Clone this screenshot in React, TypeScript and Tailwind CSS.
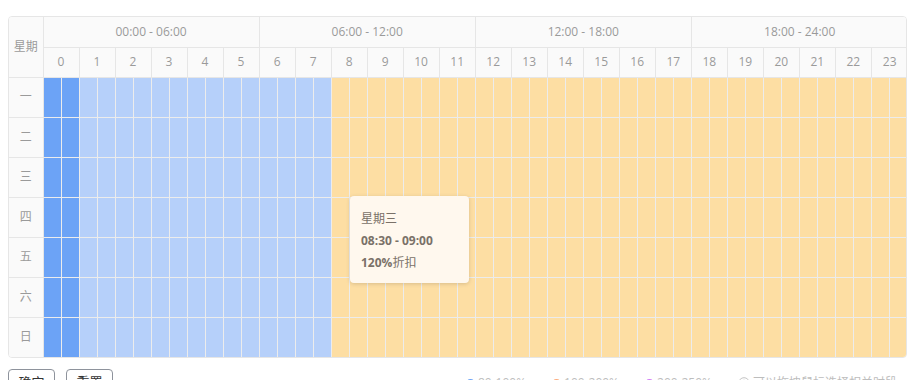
import React from 'react';

const days: string[] = ["一", "二", "三", "四", "五", "六", "日"];
const ranges: string[] = ["00:00 - 06:00", "06:00 - 12:00", "12:00 - 18:00", "18:00 - 24:00"];
const hours: number[] = Array.from({ length: 24 }, (_, i) => i);
const halves: number[] = Array.from({ length: 48 }, (_, i) => i);

// half-hour index -> colour class
function cellColor(i: number): string {
  if (i < 2) return "bg-[#6ca3f6]";
  if (i < 16) return "bg-[#b6d0fa]";
  return "bg-[#fddea3]";
}

const Legend = ({ color, text }: { color: string; text: string }) => (
  <div className="flex items-center gap-[3px]">
    <span className={`inline-block w-[9px] h-[9px] rounded-full ${color}`}></span>
    <span>{text}</span>
  </div>
);

const App = () => {
  return (
    <div className="pt-4 px-2 text-[12px] font-['Open_Sans','Noto_Sans_CJK_SC',sans-serif] bg-white min-h-screen">
      <div className="relative w-[899px]">
        <div className="border border-[#e6e6e6] rounded-[4px] overflow-hidden">
          <table className="table-fixed border-collapse w-[897px] text-[#9a9a9a]">
            <colgroup>
              <col className="w-[34px]" />
              {halves.map((h) => (
                <col key={h} className="w-[18px]" />
              ))}
            </colgroup>
            <thead className="bg-[#fafafa]">
              <tr className="h-[30px]">
                <th rowSpan={2} className="font-normal border-r border-b border-[#e6e6e6]">星期</th>
                {ranges.map((r, i) => (
                  <th key={r} colSpan={12} className={`font-normal border-b border-[#e6e6e6] ${i < 3 ? "border-r" : ""}`}>{r}</th>
                ))}
              </tr>
              <tr className="h-[30px]">
                {hours.map((h) => (
                  <th key={h} colSpan={2} className={`font-normal border-b border-[#e6e6e6] ${h < 23 ? "border-r" : ""}`}>{h}</th>
                ))}
              </tr>
            </thead>
            <tbody>
              {days.map((d, r) => (
                <tr key={d} className="h-[40px]">
                  <td className={`bg-[#fafafa] text-center border-r border-[#e6e6e6] ${r < 6 ? "border-b" : ""}`}>{d}</td>
                  {halves.map((h) => (
                    <td key={h} className={`${cellColor(h)} border-[#ececec] ${h < 47 ? "border-r" : ""} ${r < 6 ? "border-b" : ""}`}></td>
                  ))}
                </tr>
              ))}
            </tbody>
          </table>
        </div>

        {/* hover tooltip */}
        <div className="absolute left-[342px] top-[180px] w-[119px] h-[87px] rounded-[4px] bg-[#fff8ee] shadow-[0_1px_4px_rgba(0,0,0,0.15)] px-[11px] pt-[12px] text-[12px] leading-[22px] text-[#7a7168]">
          <div>星期三</div>
          <div className="font-bold">08:30 - 09:00</div>
          <div><span className="font-bold">120%</span>折扣</div>
        </div>
      </div>

      <div className="w-[899px] mt-[11px] flex items-center justify-between">
        <div className="flex gap-[11px]">
          <button className="w-[47px] h-[28px] border border-[#8e939c] rounded-[4px] text-[13px] text-[#333] bg-white">确定</button>
          <button className="w-[47px] h-[28px] border border-[#8e939c] rounded-[4px] text-[13px] text-[#333] bg-white">重置</button>
        </div>
        <div className="flex items-center gap-[26px] text-[#bdbdbd] pr-[10px]">
          <Legend color="bg-[#6ca3f6]" text="80-100%" />
          <Legend color="bg-[#fcab7c]" text="100-200%" />
          <Legend color="bg-[#d27cf5]" text="200-250%" />
          <div className="flex items-center gap-[3px]">
            <svg width="12" height="12" viewBox="0 0 12 12" fill="none" stroke="#c4c4c4" strokeWidth="1">
              <circle cx="6" cy="6" r="5.3" />
              <line x1="6" y1="5" x2="6" y2="9" />
              <circle cx="6" cy="3.4" r="0.5" fill="#c4c4c4" />
            </svg>
            <span>可以拖拽鼠标选择相关时段</span>
          </div>
        </div>
      </div>
    </div>
  );
};

export default App;
